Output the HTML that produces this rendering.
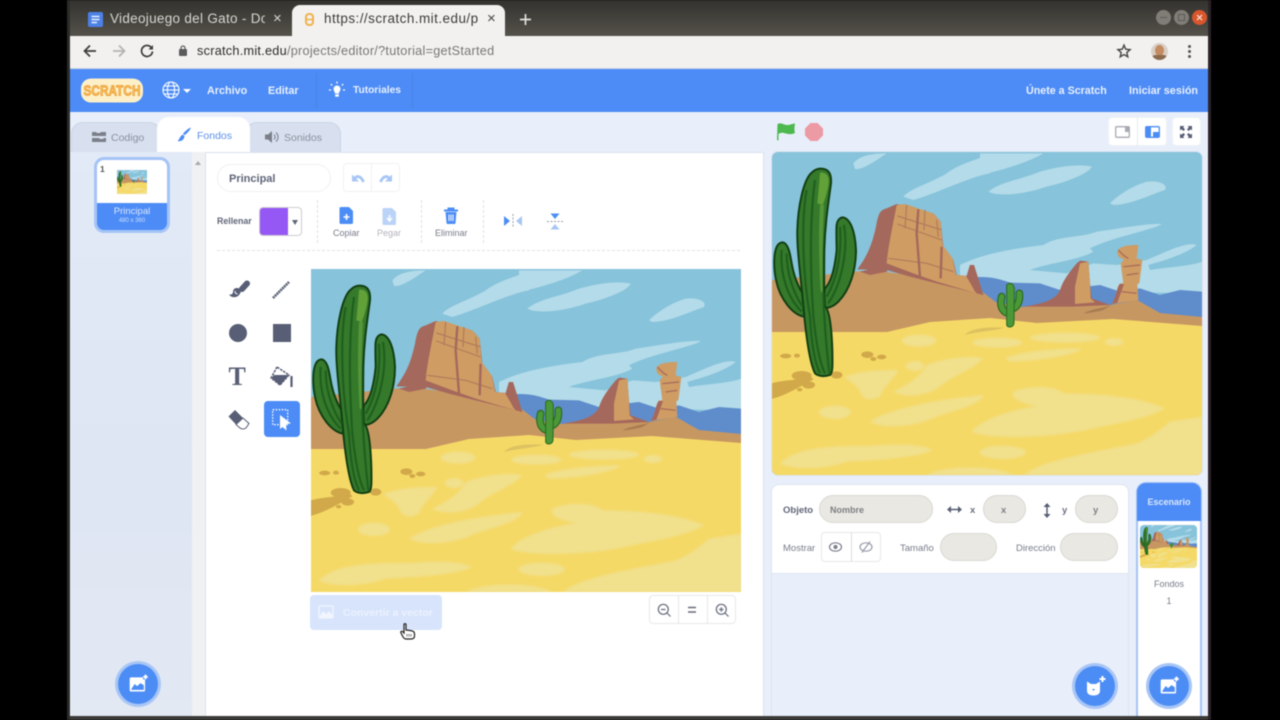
<!DOCTYPE html>
<html><head><meta charset="utf-8"><style>
*{box-sizing:border-box;margin:0;padding:0}
html,body{width:1280px;height:720px;overflow:hidden;background:#000}
body{position:relative;font-family:"Liberation Sans",sans-serif}
#w{position:absolute;left:0;top:0;width:1280px;height:720px;background:#000;filter:blur(.45px)}
.a{position:absolute}
.t{position:absolute;white-space:nowrap;line-height:1}
.b{font-weight:bold}
svg{display:block;overflow:visible}
.pill{position:absolute;background:#e9e8e3;border:1px solid #d9d8d3;border-radius:15px}
.fab{position:absolute;width:40px;height:40px;border-radius:50%;background:#4c8df5;box-shadow:0 0 0 3px #a9c6f5}
</style></head><body>
<svg width="0" height="0" style="position:absolute"><defs>
<filter id="soft"><feGaussianBlur stdDeviation="3"/></filter>
<symbol id="scene" viewBox="0 0 430 323" preserveAspectRatio="none">
<rect width="430" height="323" fill="#87c3db"/>
<g transform="translate(-2,-2) scale(.3333)">
<path d="M250,40C270,15 310,10 350,10C320,30 280,60 255,57Z" fill="#b3dbe9"/>
<path d="M400,140C420,115 480,100 530,70C570,40 620,30 660,12L660,70C600,80 500,130 430,150Z" fill="#b3dbe9"/>
</g>
<g transform="translate(208,-2) scale(.3333)" fill="#b3dbe9">
<path d="M0,10L190,10C150,35 70,60 0,75Z"/>
<path d="M25,125C60,95 120,90 180,65C230,50 300,40 335,50C330,70 250,100 200,110C130,135 50,140 25,125Z"/>
<path d="M390,160C410,140 450,110 500,95C540,90 565,105 555,120C510,135 450,165 400,165Z"/>
<path d="M-60,345C-10,320 60,300 190,285C240,255 300,265 350,245C420,235 500,220 545,222C520,240 400,260 330,295L340,305C300,330 200,340 150,360L260,370L340,340L410,345L500,330C570,300 620,275 650,285C620,310 560,330 505,345L510,360C570,350 620,350 668,335L668,430L-60,420Z"/>
<path d="M-70,400C-30,375 30,375 90,398L180,400L240,420L360,405L420,425L480,415L540,435L600,420L668,425L668,520L-70,530Z" fill="#5f8ccb"/>
</g>
<path d="M0,128L0,200L430,200L430,165L388,161L365,148L338,153L318,148L285,150L251,155L225,151L208,138L190,130L100,118L0,128Z" fill="#c79762"/>
<g transform="translate(-2,-2) scale(.3333)">
<path d="M262,358C290,320 305,290 318,230C325,190 330,180 350,175L380,162L490,190L512,215L520,290L550,330L560,375L590,378L600,345L612,345L640,435L500,400L420,380L350,360Z" fill="#a5685c"/>
<path d="M352,320C360,260 370,220 380,165L405,162L490,190L512,215L518,285L548,325L558,375L588,378L620,430L500,395L430,370L350,340Z" fill="#cf9c63"/>
<path d="M382,198L515,240M382,222L515,270M410,165L405,235M465,180L462,240M500,210L505,260M355,325L470,340L550,365" stroke="#b07a5c" stroke-width="3.500" fill="none"/>
<path d="M445,178L440,250L450,380M515,290L512,385" stroke="#a5685c" stroke-width="7" fill="none"/>
<path d="M590,378L600,345L612,345L640,435L615,425Z" fill="#a5685c"/>
<path d="M270,365L350,345L352,365L300,375Z" fill="#a5685c"/>
</g>
<g transform="translate(208,-2) scale(.3333)">
<path d="M130,470C200,460 230,445 240,420C250,390 265,370 290,340L300,332L325,335L330,400L335,445L390,465L280,470Z" fill="#a5685c"/>
<path d="M285,462L285,410L300,340L325,335L330,400L332,445L345,457Z" fill="#cf9c63"/>
<path d="M395,462C410,440 410,410 420,400L430,400L422,340L432,328C420,325 412,320 412,305C415,290 440,285 475,285L470,325L487,330L478,400L472,402L475,450Z" fill="#cf9c63"/>
<path d="M395,462C410,440 410,410 420,402L432,402L412,458Z" fill="#a5685c"/>
<path d="M415,300C425,310 432,320 445,325M430,350L480,345M440,375L475,370M425,425L470,430" stroke="#a5685c" stroke-width="3.500" fill="none"/>
<path d="M310,490C340,475 370,475 395,465L370,480C350,485 330,490 310,490Z" fill="#a87c52"/>
</g>
<path d="M0,180L115,180L158,170L218,166L265,171L341,167L430,174L430,323L0,323Z" fill="#f5d966"/>
<g transform="translate(-2,168) scale(.3333)" fill="#f1e08c" filter="url(#soft)">
<ellipse cx="447" cy="62" rx="52" ry="18"/><ellipse cx="682" cy="68" rx="75" ry="15"/><ellipse cx="885" cy="53" rx="105" ry="15"/><ellipse cx="1032" cy="66" rx="28" ry="12"/>
<path d="M705,115C760,90 880,85 935,85C920,105 800,125 720,125Z"/>
<path d="M225,170C280,150 340,150 385,150C370,180 340,200 330,230C300,245 280,240 270,215C260,190 230,185 225,170Z"/>
<path d="M370,215C420,190 450,170 470,135C520,115 600,105 640,115C610,150 540,170 510,200C470,230 400,235 370,215Z"/>
<ellipse cx="435" cy="138" rx="28" ry="15"/><ellipse cx="195" cy="277" rx="48" ry="20"/>
<path d="M300,305C350,270 480,240 640,225C640,250 560,270 500,290C440,320 340,330 300,305Z"/>
<path d="M605,335C630,300 720,270 800,258C750,250 720,235 730,215C770,195 860,195 880,220C950,220 1100,225 1185,265C1150,290 1050,310 970,325C850,355 650,360 605,335Z"/>
<path d="M30,430C70,390 150,375 300,378C370,372 450,370 490,390C450,410 350,420 230,425C170,450 60,450 30,430Z"/>
<ellipse cx="698" cy="397" rx="70" ry="20"/>
<path d="M760,465C820,420 950,400 1100,370C1150,350 1180,320 1200,305L1298,290L1298,465Z"/>
<path d="M470,465C520,435 680,435 730,465Z"/>
</g>
<g transform="translate(-2,168) scale(.3333)">
<g fill="#d1a94a">
<path d="M5,190C40,180 80,180 125,172L130,178C90,200 50,225 5,237Z"/>
<ellipse cx="47" cy="108" rx="17" ry="7"/><ellipse cx="81" cy="107" rx="9" ry="6"/><ellipse cx="292" cy="104" rx="18" ry="10"/><ellipse cx="335" cy="111" rx="14" ry="7"/><ellipse cx="310" cy="117" rx="9" ry="6"/><ellipse cx="95" cy="167" rx="30" ry="14"/><ellipse cx="200" cy="165" rx="17" ry="11"/><ellipse cx="116" cy="195" rx="19" ry="11"/><ellipse cx="89" cy="209" rx="8" ry="5"/>
</g>
<path d="M585,45C600,25 650,20 705,23C660,35 620,35 585,45Z" fill="#dcc260"/>
</g>
<g transform="translate(208,-2) scale(.3333)">
<path d="M65,440C58,470 68,485 85,490M118,430C120,455 112,470 100,475" fill="none" stroke="#2a6a20" stroke-width="23" stroke-linecap="round"/>
<path d="M65,440C58,470 68,485 85,490M118,430C120,455 112,470 100,475" fill="none" stroke="#4a9838" stroke-width="16" stroke-linecap="round"/>
<path d="M80,405C90,395 100,400 103,415L102,520C100,532 85,535 80,525Z" fill="#4a9838" stroke="#2a6a20" stroke-width="3"/>
</g>
<g transform="translate(-2,-2) scale(.3333)">
<g fill="#35792b" stroke="#123f13" stroke-width="6" stroke-linejoin="round">
<path d="M38,277C55,280 60,310 65,340C72,380 85,410 98,430L103,500C70,495 30,450 18,390C10,350 10,300 25,283C30,278 35,277 38,277Z"/>
<path d="M218,202C240,205 255,240 258,300C258,360 240,420 205,455C190,470 170,478 160,470C158,450 160,430 165,415C185,395 195,350 200,300C200,280 198,240 200,225C202,210 210,203 218,202Z"/>
<path d="M152,56C175,56 185,70 183,100C175,160 165,220 163,300C162,380 162,440 165,470C180,480 185,540 187,600C188,650 188,670 180,675C165,680 145,680 135,670C120,640 110,570 103,500C95,400 80,300 82,240C84,170 100,90 125,68C135,58 143,56 152,56Z"/>
</g>
<path d="M150,68C170,66 178,78 176,100C172,125 165,150 158,165L142,160C145,130 148,95 150,68Z" fill="#62a038"/>
<path d="M150,165C146,240 146,330 152,425L158,425C156,340 158,240 162,165Z" fill="#56963a"/>
<g fill="none" stroke="#1f5f1e" stroke-width="6.500">
<path d="M110,120C95,200 95,350 120,500C125,590 135,640 150,670"/><path d="M135,90C120,200 120,350 130,500C140,590 150,640 165,670"/><path d="M160,430C162,500 170,600 178,670"/>
<path d="M222,225C235,300 215,400 175,460"/><path d="M210,230C215,300 205,380 170,440"/>
<path d="M35,300C30,370 50,440 95,485"/><path d="M50,310C50,370 70,430 98,470"/>
</g></g>
</symbol>
<symbol id="photo" viewBox="0 0 24 24"><path d="M4,4H18V6.500H20.500V19a2,2 0 0 1 -2,2H4a2,2 0 0 1 -2,-2V6a2,2 0 0 1 2,-2Z" fill="#fff"/><path d="M4,18L8,12L11,14.500L15,11L19,13.500V19H4Z" fill="#4c8df5"/><path d="M21,0.800V6.200M18.300,3.500H23.700" stroke="#fff" stroke-width="2.200"/></symbol>
</defs></svg>
<div id="w">
<!-- window -->
<div class="a" style="left:67px;top:0;width:3px;height:720px;background:#2b2b2a"></div>
<div class="a" style="left:70px;top:0;width:1138px;height:36px;background:linear-gradient(#33322e,#55524b)"></div>
<div class="a" style="left:1208px;top:0;width:3px;height:720px;background:#2c2228"></div>
<!-- tabs -->
<svg class="a" style="left:88px;top:12px" width="15" height="15" viewBox="0 0 15 15"><rect width="15" height="15" rx="2" fill="#4c82e6"/><path d="M3.500,4.500H11.500M3.500,7.500H11.500M3.500,10.500H9" stroke="#e8eefc" stroke-width="1.500"/></svg>
<div class="t" style="left:110px;top:12px;font-size:13.500px;color:#d8d6d1;letter-spacing:.3px;width:155px;overflow:hidden">Videojuego del Gato - Doc</div>
<div class="t" style="left:273px;top:11px;font-size:15px;color:#d8d6d1">×</div>
<div class="a" style="left:292px;top:5px;width:213px;height:31px;background:#f2f1ef;border-radius:8px 8px 0 0"></div>
<svg class="a" style="left:305px;top:13px" width="9" height="13" viewBox="0 0 9 13"><rect x="1" y="1" width="7" height="11" rx="3" fill="none" stroke="#efb24c" stroke-width="2"/><path d="M2,6.500H7" stroke="#efb24c" stroke-width="1.500"/></svg>
<div class="t" style="left:324px;top:12px;font-size:13.500px;color:#3c3c3c;letter-spacing:.45px;width:156px;overflow:hidden">https://scratch.mit.edu/p</div>
<div class="t" style="left:487px;top:11px;font-size:15px;color:#444">×</div>
<svg class="a" style="left:520px;top:14px" width="11" height="11"><path d="M5.500,0V11M0,5.500H11" stroke="#e4e2de" stroke-width="1.700"/></svg>
<!-- window buttons -->
<div class="a" style="left:1156px;top:10px;width:15px;height:15px;border-radius:50%;background:#807d77"></div><div class="a" style="left:1160px;top:17px;width:7px;height:1px;background:#5c5a55"></div>
<div class="a" style="left:1174px;top:10px;width:15px;height:15px;border-radius:50%;background:#807d77"></div><div class="a" style="left:1178px;top:14px;width:7px;height:7px;border:1px solid #5c5a55"></div>
<div class="a" style="left:1192px;top:10px;width:15px;height:15px;border-radius:50%;background:#d9562c"></div>
<svg class="a" style="left:1196px;top:14px" width="7" height="7"><path d="M1,1L6,6M6,1L1,6" stroke="#f6d8c8" stroke-width="1.300"/></svg>
<!-- toolbar -->
<div class="a" style="left:70px;top:36px;width:1138px;height:33px;background:#f2f1ef;border-bottom:1px solid #cfd6e2"></div>
<svg class="a" style="left:83px;top:44px" width="14" height="14" viewBox="0 0 14 14"><path d="M13,7H2M7,1.500L1.500,7L7,12.500" fill="none" stroke="#3c3c3c" stroke-width="1.700"/></svg>
<svg class="a" style="left:112px;top:44px" width="14" height="14" viewBox="0 0 14 14"><path d="M1,7H12M7,1.500L12.500,7L7,12.500" fill="none" stroke="#b3b3b1" stroke-width="1.700"/></svg>
<svg class="a" style="left:140px;top:44px" width="14" height="14" viewBox="0 0 14 14"><path d="M11.800,4.200A5.500,5.500 0 1 0 12.500,7.500" fill="none" stroke="#3c3c3c" stroke-width="1.700"/><path d="M13,1V5.500H8.500Z" fill="#3c3c3c"/></svg>
<svg class="a" style="left:179px;top:45px" width="8" height="11" viewBox="0 0 8 11"><rect y="4" width="8" height="7" rx="1" fill="#5a5a5a"/><path d="M2,4.500V3a2,2 0 0 1 4,0V4.500" fill="none" stroke="#5a5a5a" stroke-width="1.200"/></svg>
<div class="t" style="left:197px;top:45px;font-size:12.700px;color:#777;letter-spacing:.26px"><span style="color:#2c2c2c">scratch.mit.edu</span>/projects/editor/?tutorial=getStarted</div>
<svg class="a" style="left:1117px;top:44px" width="14" height="14" viewBox="0 0 24 24"><path d="M12,2L15,9L22.500,9.700L16.800,14.600L18.500,22L12,18.100L5.500,22L7.200,14.600L1.500,9.700L9,9Z" fill="none" stroke="#444" stroke-width="2.400"/></svg>
<div class="a" style="left:1151px;top:43px;width:17px;height:17px;border-radius:50%;background:#d8cfc5;overflow:hidden"><div class="a" style="left:4px;top:2px;width:9px;height:11px;border-radius:50%;background:#c48a60"></div><div class="a" style="left:1px;top:12px;width:15px;height:6px;background:#8b6a4e;border-radius:4px"></div></div>
<div class="a" style="left:1187.500px;top:45px;width:3px;height:3px;background:#555;border-radius:50%;box-shadow:0 5px 0 #555,0 10px 0 #555"></div>

<!-- app -->
<div class="a" style="left:70px;top:69px;width:1138px;height:647px;background:#e8effa"></div>
<div class="a" style="left:70px;top:69px;width:1138px;height:43px;background:#4d8cf6"></div>
<div class="a" style="left:70px;top:716px;width:1138px;height:4px;background:#3b3a38"></div>
<!-- logo -->
<svg class="a" style="left:81px;top:78px" width="62" height="25" viewBox="0 0 62 25"><rect x="0" y="0.500" width="62" height="24" rx="10" fill="#fdf0c8"/><text x="31" y="17.500" text-anchor="middle" font-family="'Liberation Sans',sans-serif" font-size="15" font-weight="bold" fill="#f9c65c" stroke="#e8922c" stroke-width=".7" textLength="57" lengthAdjust="spacingAndGlyphs">SCRATCH</text></svg>
<svg class="a" style="left:162px;top:81px" width="18" height="18" viewBox="0 0 18 18" fill="none" stroke="#fff" stroke-width="1.100"><circle cx="9" cy="9" r="8"/><ellipse cx="9" cy="9" rx="3.600" ry="8"/><path d="M1,9H17M2,5H16M2,13H16"/></svg>
<div class="a" style="left:183px;top:89px;width:0;height:0;border:4px solid transparent;border-top:4px solid #fff"></div>
<div class="t b" style="left:207px;top:85.500px;font-size:10.800px;color:#e8f0fe">Archivo</div>
<div class="t b" style="left:268px;top:85.500px;font-size:10.800px;color:#e8f0fe">Editar</div>
<div class="a" style="left:316px;top:73px;width:1px;height:35px;background:#4a82e2"></div>
<div class="a" style="left:412px;top:73px;width:1px;height:35px;background:#4a82e2"></div>
<svg class="a" style="left:328px;top:81px" width="18" height="18" viewBox="0 0 18 18"><path d="M5.500,8a3.500,3.500 0 1 1 7,0c0,2 -1.500,2.500 -1.500,4.500H7c0,-2 -1.500,-2.500 -1.500,-4.500Z" fill="#fff"/><rect x="7.200" y="13.200" width="3.600" height="2.500" fill="#fff"/><path d="M9,0.500V2.500M2.800,3L4.200,4.400M15.200,3L13.800,4.400M1,9H3M15,9H17" stroke="#fff" stroke-width="1.200"/></svg>
<div class="t b" style="left:353px;top:85.500px;font-size:10.200px;color:#e8f0fe">Tutoriales</div>
<div class="t b" style="left:1026px;top:85.500px;font-size:10.700px;color:#e8f0fe;">Únete a Scratch</div>
<div class="t b" style="left:1129px;top:85.500px;font-size:10.800px;color:#e8f0fe">Iniciar sesión</div>

<!-- editor tabs -->
<div class="a" style="left:71px;top:122px;width:90px;height:31px;background:#d8e0ef;border:1px solid #c9d3e5;border-radius:12px 12px 0 0"></div>
<div class="a" style="left:245px;top:122px;width:96px;height:31px;background:#d8e0ef;border:1px solid #c9d3e5;border-radius:12px 12px 0 0"></div>
<div class="a" style="left:157px;top:117px;width:93px;height:36px;background:#fff;border-radius:12px 12px 0 0"></div>
<svg class="a" style="left:92px;top:131px" width="14" height="12" viewBox="0 0 14 12" fill="#7a7f89"><path d="M0,1H4L5,2H8L9,1H14V5H0ZM0,7H7L8,8H11L12,7H14V11H0Z"/></svg>
<div class="t" style="left:111px;top:132.500px;font-size:10.500px;color:#8a8f9c">Codigo</div>
<svg class="a" style="left:177px;top:127px" width="15" height="16" viewBox="0 0 15 16"><path d="M14,0.500C13,3.500 10,6.500 7.500,8.200L6,6.500C8.500,4 11,1.500 14,0.500Z" fill="#4c8df5"/><path d="M6,7.500L7.500,9.500C7,13 3.500,15 0.500,14C2.500,13 2.500,9 6,7.500Z" fill="#4c8df5"/></svg>
<div class="t" style="left:197px;top:131px;font-size:10.500px;color:#5b90e6">Fondos</div>
<svg class="a" style="left:264px;top:130px" width="16" height="14" viewBox="0 0 16 14"><path d="M1,4.500H4L8,1V13L4,9.500H1Z" fill="#7a7f89"/><path d="M10,4.500A3.500,3.500 0 0 1 10,9.500M12,2.500A6,6 0 0 1 12,11.500" fill="none" stroke="#7a7f89" stroke-width="1.100"/></svg>
<div class="t" style="left:284px;top:132.500px;font-size:10.500px;color:#8a8f9c">Sonidos</div>

<!-- left column -->
<div class="a" style="left:71px;top:152px;width:121px;height:564px;background:linear-gradient(#e3eaf7,#dfe6f3 60%,#e3e9f3)"></div>
<div class="a" style="left:192px;top:152px;width:13px;height:564px;background:#f0f1f3"></div>
<div class="a" style="left:195px;top:158px;width:0;height:0;border:3px solid transparent;border-bottom:4px solid #a8a8a8"></div>
<div class="a" style="left:205px;top:152px;width:559px;height:564px;background:#fff;border:1px solid #dae2ee;border-bottom:0"></div>
<div class="a" style="left:94px;top:157px;width:76px;height:76px;border-radius:10px;background:#a5c4f6"></div>
<div class="a" style="left:97px;top:160px;width:70px;height:70px;border-radius:7px;background:#4d8cf6;overflow:hidden"><div class="a" style="left:0;top:0;width:70px;height:43px;background:#fff"></div></div>
<svg class="a" style="left:117px;top:170px" width="30" height="24"><use href="#scene" width="30" height="24"/></svg>
<div class="t b" style="left:100px;top:165px;font-size:8.500px;color:#555">1</div>
<div class="t" style="left:97px;top:207px;width:70px;text-align:center;font-size:9.500px;color:#dbe7fd">Principal</div>
<div class="t" style="left:97px;top:218px;width:70px;text-align:center;font-size:6px;color:#cfdffb">480 x 360</div>
<div class="fab" style="left:118px;top:664px"><svg class="a" style="left:10px;top:10px" width="20" height="20"><use href="#photo" width="20" height="20"/></svg></div>

<!-- paint top -->
<div class="a" style="left:217px;top:164px;width:114px;height:28px;border:1px solid #f0f0f2;border-radius:14px"></div>
<div class="t b" style="left:229px;top:173.500px;font-size:11px;color:#5f6578">Principal</div>
<div class="a" style="left:343px;top:163px;width:57px;height:29px;border:1px solid #f1f2f6;border-radius:4px"></div>
<div class="a" style="left:371px;top:163px;width:1px;height:29px;background:#f1f2f6"></div>
<svg class="a" style="left:351px;top:174px" width="14" height="9" viewBox="0 0 14 9"><path d="M1,0.500V7.500H8Z" fill="#a8c6f5"/><path d="M3,5C6,1 10,2 12.500,8" fill="none" stroke="#a8c6f5" stroke-width="2.800"/></svg>
<svg class="a" style="left:379px;top:174px" width="14" height="9" viewBox="0 0 14 9"><path d="M13,0.500V7.500H6Z" fill="#a8c6f5"/><path d="M11,5C8,1 4,2 1.500,8" fill="none" stroke="#a8c6f5" stroke-width="2.800"/></svg>
<div class="t b" style="left:217px;top:217px;font-size:8.800px;color:#5f6578">Rellenar</div>
<div class="a" style="left:259px;top:207px;width:43px;height:29px;border:1px solid #cdcdd2;border-radius:4px;background:#fff;overflow:hidden"><div class="a" style="left:-1px;top:-1px;width:29px;height:29px;background:#9558f4"></div></div>
<div class="a" style="left:292px;top:220px;width:0;height:0;border:3.500px solid transparent;border-top:5px solid #5f6578"></div>
<div class="a" style="left:317px;top:200px;height:43px;border-left:1px dashed #e0e0e3"></div>
<div class="a" style="left:421px;top:200px;height:43px;border-left:1px dashed #e0e0e3"></div>
<div class="a" style="left:483px;top:200px;height:43px;border-left:1px dashed #e0e0e3"></div>
<svg class="a" style="left:339px;top:207px" width="15" height="17" viewBox="0 0 15 17"><path d="M2,0H10L14,4V15.500a1.500,1.500 0 0 1 -1.500,1.500H2a1.500,1.500 0 0 1 -1.500,-1.500V1.500A1.500,1.500 0 0 1 2,0Z" fill="#4c8df5"/><path d="M7.500,7V13M4.500,10H10.500" stroke="#fff" stroke-width="1.600"/></svg>
<div class="t" style="left:333px;top:229px;font-size:9px;color:#777c8a">Copiar</div>
<svg class="a" style="left:382px;top:208px" width="15" height="17" viewBox="0 0 15 17"><path d="M2,0H10L14,4V15.500a1.500,1.500 0 0 1 -1.500,1.500H2a1.500,1.500 0 0 1 -1.500,-1.500V1.500A1.500,1.500 0 0 1 2,0Z" fill="#bcd3f8"/><path d="M7.500,7V12M5,10L7.500,13L10,10" stroke="#fff" stroke-width="1.400" fill="none"/></svg>
<div class="t" style="left:377px;top:229px;font-size:9px;color:#b3b5bd">Pegar</div>
<svg class="a" style="left:443px;top:207px" width="16" height="17" viewBox="0 0 16 17"><path d="M1,3.500H15M5.500,3.500V1.500H10.500V3.500" stroke="#4c8df5" stroke-width="2" fill="none"/><path d="M2.500,5H13.500L12.500,16a1,1 0 0 1 -1,1H4.500a1,1 0 0 1 -1,-1Z" fill="#4c8df5"/><path d="M6,7.500V14M8,7.500V14M10,7.500V14" stroke="#fff" stroke-width="1"/></svg>
<div class="t" style="left:435px;top:229px;font-size:9px;color:#777c8a">Eliminar</div>
<svg class="a" style="left:504px;top:214px" width="18" height="14" viewBox="0 0 18 14"><path d="M0,2L6,7L0,12Z" fill="#4c8df5"/><path d="M18,2L12,7L18,12Z" fill="#a8c6f5"/><path d="M9,0V14" stroke="#9a9ea8" stroke-dasharray="2 1.500"/></svg>
<svg class="a" style="left:547px;top:213px" width="16" height="17" viewBox="0 0 16 17"><path d="M3.500,0.500H12.500L8,6Z" fill="#4c8df5"/><path d="M3.500,16.500H12.500L8,11Z" fill="#a8c6f5"/><path d="M0,8.500H16" stroke="#9a9ea8" stroke-dasharray="2 1.500"/></svg>
<div class="a" style="left:217px;top:250px;width:523px;border-top:1px dashed #e2e2e5"></div>

<!-- tools -->
<svg class="a" style="left:228px;top:280px" width="22" height="20" viewBox="0 0 22 20"><path d="M14,9L19,3.500" stroke="#575e75" stroke-width="6" stroke-linecap="round"/><path d="M12,9C9,7 5,8 5,12C5,14 3,15 1,14.500C3,18 9,18 11,15C13,13 13,11 12,9Z" fill="#575e75"/><path d="M7,11C7,13 8,14 9.500,14" stroke="#fff" fill="none"/></svg>
<svg class="a" style="left:272px;top:281px" width="18" height="18" viewBox="0 0 18 18"><path d="M1,17L17,1" stroke="#575e75" stroke-width="2.500" stroke-dasharray="2 .6"/></svg>
<div class="a" style="left:229px;top:324px;width:18px;height:18px;border-radius:50%;background:#575e75"></div>
<div class="a" style="left:273px;top:324px;width:18px;height:18px;background:#575e75"></div>
<div class="t" style="left:228.500px;top:364px;font-family:'Liberation Serif',serif;font-weight:bold;font-size:26px;color:#575e75;">T</div>
<svg class="a" style="left:270px;top:365px" width="24" height="23" viewBox="0 0 24 23"><path d="M7,2L1,13L10,20L19,10Z" fill="#fff" stroke="#575e75" stroke-width="1.500" stroke-dasharray="2.500 1"/><path d="M1.500,13L4,10H19L10,20.500Z" fill="#575e75"/><path d="M21.500,11V22" stroke="#575e75" stroke-width="2.200"/></svg>
<svg class="a" style="left:228px;top:409px" width="22" height="21" viewBox="0 0 22 21"><path d="M0.500,7.500L7,1L15,9L8,15.500Z" fill="#575e75"/><path d="M8,15.500L15,9L21,14.500L18,19C16,20.500 13,20 12,19Z" fill="#fff" stroke="#575e75"/></svg>
<div class="a" style="left:264px;top:401px;width:36px;height:36px;border-radius:4px;background:#4d8cf6"></div>
<svg class="a" style="left:272px;top:409px" width="22" height="22" viewBox="0 0 22 22"><rect x="0.700" y="0.700" width="15" height="15" fill="none" stroke="#fff" stroke-width="1.300" stroke-dasharray="1.500 1.500"/><path d="M8,6L19,14.500L14,15L14.500,21.500L10.500,18L8,20Z" fill="#fff"/></svg>

<!-- canvas -->
<svg class="a" style="left:311px;top:269px" width="430" height="323"><use href="#scene" width="430" height="323"/></svg>
<div class="a" style="left:310px;top:595px;width:132px;height:35px;background:#d7e4fb;border-radius:4px"></div>
<svg class="a" style="left:318px;top:605px" width="16" height="14" viewBox="0 0 16 14"><rect x="1" y="1" width="14" height="12" rx="1" fill="none" stroke="#f0f5fe" stroke-width="1.300"/><path d="M1,12L5,6L8,9L11,6L15,10V13H1Z" fill="#f0f5fe"/></svg>
<div class="t b" style="left:343px;top:608px;font-size:10.500px;color:#ecf2fe">Convertir a vector</div>
<svg class="a" style="left:400px;top:623px" width="16" height="17" viewBox="0 0 16 17"><path d="M4,1.500C4,0.500 6,0.500 6,1.500V7L10,7.500C13,8 14.500,8.500 14.500,11V13C14.500,15 13,16 11,16H6C4.500,16 3.500,15 2.500,13L0.800,9.500C0.500,8.500 1.800,7.800 2.500,8.500L4,10Z" fill="#fff" stroke="#222" stroke-width="1.200"/><path d="M7,11V13.500M9,11V13.500M11,11V13.500" stroke="#555" stroke-width=".8"/></svg>
<div class="a" style="left:649px;top:595px;width:87px;height:29px;border:1px solid #e8e8ea;border-radius:4px;background:#fff"></div>
<div class="a" style="left:678px;top:595px;width:1px;height:29px;background:#e8e8ea"></div>
<div class="a" style="left:707px;top:595px;width:1px;height:29px;background:#e8e8ea"></div>
<svg class="a" style="left:657px;top:603px" width="14" height="14" viewBox="0 0 14 14" fill="none" stroke="#666b7c" stroke-width="1.200"><circle cx="6.300" cy="6.300" r="5"/><path d="M10,10L13.500,13.500M4,6.500H8.500"/></svg>
<svg class="a" style="left:687px;top:606px" width="10" height="8"><path d="M1,1.500H9M1,6H9" stroke="#666b7c" stroke-width="1.500"/></svg>
<svg class="a" style="left:715px;top:603px" width="14" height="14" viewBox="0 0 14 14" fill="none" stroke="#666b7c" stroke-width="1.200"><circle cx="6.300" cy="6.300" r="5"/><path d="M10,10L13.500,13.500M4,6.500H8.500M6.300,4.200V8.800"/></svg>

<!-- stage bar -->
<svg class="a" style="left:776px;top:122px" width="20" height="19" viewBox="0 0 20 19"><path d="M1.500,2C6,0 8,3.500 12,3C15,2.800 17,1.500 19,1.500C18.500,5 18,8 19,11C15,13 11,12 8,11C6,10.500 3.500,11 2.500,12L2.500,18.500L1,18Z" fill="#4cb84e"/></svg>
<svg class="a" style="left:805px;top:123px" width="18" height="18" viewBox="0 0 18 18"><path d="M5.500,0H12.500L18,5.500V12.500L12.500,18H5.500L0,12.500V5.500Z" fill="#ec9aa4"/></svg>
<div class="a" style="left:1108px;top:117px;width:59px;height:29px;background:#fff;border:1px solid #eef1f6;border-radius:4px"></div>
<div class="a" style="left:1137px;top:117px;width:1px;height:29px;background:#e8ecf3"></div>
<div class="a" style="left:1172px;top:117px;width:29px;height:29px;background:#fff;border:1px solid #eef1f6;border-radius:4px"></div>
<svg class="a" style="left:1115px;top:126px" width="15" height="12" viewBox="0 0 15 12"><rect x="0.700" y="0.700" width="13.600" height="10.600" rx="1" fill="none" stroke="#a8aab2" stroke-width="1.300"/><rect x="10" y="1" width="4" height="5" fill="#a8aab2"/></svg>
<svg class="a" style="left:1145px;top:126px" width="15" height="12" viewBox="0 0 15 12"><rect x="0.700" y="0.700" width="13.600" height="10.600" rx="1" fill="#fff" stroke="#4c8df5" stroke-width="1.300"/><path d="M1,1H6V11H1ZM8,6H14V11H8Z" fill="#4c8df5"/></svg>
<svg class="a" style="left:1179px;top:125px" width="14" height="14" viewBox="0 0 14 14"><path d="M1,1H5.500L4.200,2.300L6,4.500L4.500,6L2.300,4.200L1,5.500ZM13,1V5.500L11.700,4.200L9.500,6L8,4.500L9.800,2.300L8.500,1ZM1,13V8.500L2.300,9.800L4.500,8L6,9.500L4.200,11.700L5.500,13ZM13,13H8.500L9.800,11.700L8,9.500L9.500,8L11.700,9.800L13,8.500Z" fill="#575e75"/></svg>

<!-- stage -->
<div class="a" style="left:771px;top:151px;width:432px;height:325px;border:1px solid #dde4f0;border-radius:7px;overflow:hidden"><svg width="430" height="323"><use href="#scene" width="430" height="323"/></svg></div>

<!-- sprite info -->
<div class="a" style="left:771px;top:484px;width:358px;height:90px;background:#fff;border:1px solid #dde4f0;border-radius:8px 8px 0 0"></div>
<div class="a" style="left:771px;top:574px;width:358px;height:142px;border-right:1px solid #dde4f0;border-left:1px solid #dde4f0"></div>
<div class="t b" style="left:783px;top:505.500px;font-size:9.500px;color:#5f6578">Objeto</div>
<div class="pill" style="left:819px;top:495px;width:114px;height:28px"></div>
<div class="t b" style="left:830px;top:505.500px;font-size:9px;color:#7d7f82">Nombre</div>
<svg class="a" style="left:947px;top:505px" width="15" height="9"><path d="M2,4.500H13" stroke="#575e75" stroke-width="1.500"/><path d="M0,4.500L4,1V8ZM15,4.500L11,1V8Z" fill="#575e75"/></svg>
<div class="t b" style="left:970px;top:506px;font-size:9.500px;color:#6d7180">x</div>
<div class="pill" style="left:983px;top:495px;width:43px;height:28px"></div>
<div class="t b" style="left:1001px;top:505.500px;font-size:9.500px;color:#7d7f82">x</div>
<svg class="a" style="left:1043px;top:503px" width="8" height="15"><path d="M4,2V13" stroke="#575e75" stroke-width="1.500"/><path d="M4,0L7.500,4H.5ZM4,15L7.500,11H.5Z" fill="#575e75"/></svg>
<div class="t b" style="left:1062px;top:506px;font-size:9.500px;color:#6d7180">y</div>
<div class="pill" style="left:1075px;top:495px;width:43px;height:28px"></div>
<div class="t b" style="left:1093px;top:505.500px;font-size:9.500px;color:#7d7f82">y</div>
<div class="t" style="left:783px;top:543.500px;font-size:9.500px;color:#777c8a">Mostrar</div>
<div class="a" style="left:821px;top:532px;width:60px;height:30px;border:1px solid #e8e8ea;border-radius:4px"></div>
<div class="a" style="left:851px;top:532px;width:1px;height:30px;background:#dddde0"></div>
<svg class="a" style="left:829px;top:542px" width="13" height="10" viewBox="0 0 13 10" fill="none" stroke="#7d8090" stroke-width="1.200"><ellipse cx="6.500" cy="5" rx="6" ry="4.200"/><circle cx="6.500" cy="5" r="1.500" fill="#7d8090"/></svg>
<svg class="a" style="left:859px;top:541px" width="14" height="12" viewBox="0 0 14 12" fill="none" stroke="#9a9dab" stroke-width="1.200"><ellipse cx="7" cy="6" rx="6" ry="4.200"/><path d="M11,.5L3,11.500"/></svg>
<div class="t" style="left:900px;top:543.500px;font-size:9.500px;color:#777c8a">Tamaño</div>
<div class="pill" style="left:940px;top:533px;width:57px;height:28px"></div>
<div class="t" style="left:1016px;top:543.500px;font-size:9.500px;color:#777c8a">Dirección</div>
<div class="pill" style="left:1060px;top:533px;width:58px;height:28px"></div>
<div class="fab" style="left:1075px;top:666px"><svg class="a" style="left:10px;top:10px" width="21" height="21" viewBox="0 0 21 21"><path d="M2,5.500L6,8H11L15,5.500V15C15,18 12,19.500 8.500,19.500C5,19.500 2,18 2,15Z" fill="#fff"/><path d="M7,13H10L8.500,15Z" fill="#4c8df5"/><path d="M17.500,0V6M14.500,3H20.500" stroke="#fff" stroke-width="2"/></svg></div>

<!-- stage selector -->
<div class="a" style="left:1136px;top:482px;width:66px;height:234px;background:#fff;border:2px solid #a5c4f6;border-bottom:0;border-radius:10px 10px 0 0"></div>
<div class="a" style="left:1137px;top:483px;width:64px;height:38px;background:#4d8cf6;border-radius:9px 9px 0 0"></div>
<div class="t b" style="left:1137px;top:497.500px;width:64px;text-align:center;font-size:9px;color:#dbe7fd">Escenario</div>
<div class="a" style="left:1140px;top:525px;width:57px;height:43px;border-radius:4px;overflow:hidden"><svg width="57" height="43"><use href="#scene" width="57" height="43"/></svg></div>
<div class="t" style="left:1137px;top:579.500px;width:64px;text-align:center;font-size:9px;color:#777c8a">Fondos</div>
<div class="t" style="left:1137px;top:597px;width:64px;text-align:center;font-size:9px;color:#777c8a">1</div>
<div class="fab" style="left:1149px;top:666px"><svg class="a" style="left:10px;top:10px" width="20" height="20"><use href="#photo" width="20" height="20"/></svg></div>
</div>
</body></html>
